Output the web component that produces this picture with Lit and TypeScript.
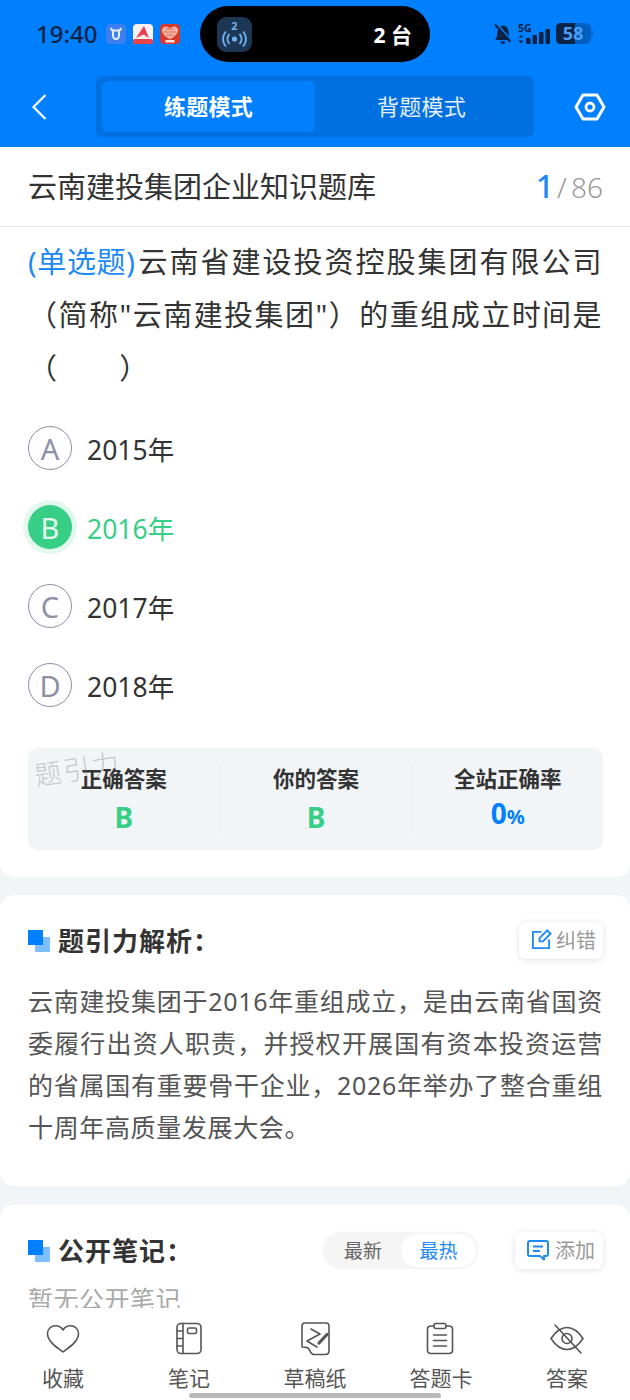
import { LitElement, html, css, svg } from 'lit';
import { customElement } from 'lit/decorators.js';

const options = [
  { key: 'A', text: '2015年' },
  { key: 'B', text: '2016年', picked: true },
  { key: 'C', text: '2017年' },
  { key: 'D', text: '2018年' },
];

const navIcons = {
  heart: svg`<path d="M17 30 C12 26 1.500 20 1.500 11.500 C1.500 7 5 3.800 9.500 3.800 C12.800 3.800 15.500 5.500 17 8 C18.500 5.500 21.200 3.800 24.500 3.800 C29 3.800 32.500 7 32.500 11.500 C32.500 20 22 26 17 30 Z"/>`,
  note: svg`<rect x="5" y="1.500" width="24" height="30" rx="4"/><path d="M11 1.500 V31.500 M5 9 H11 M5 16.500 H11 M5 24 H11"/><rect x="15.500" y="6" width="9" height="5.500" rx="1.500"/>`,
  draft: svg`<path d="M15 32.500 H27 Q31 32.500 31 29 V4 Q31 1 28 1 H7 Q4 1 4 4 V25 Q10 25 11 27 Q12 30.500 15 32.500 Z"/><path d="M13 7 L22 12 L9 19 L19 25"/><path d="M21 21 L29 12.500" stroke-width="3.200"/>`,
  card: svg`<path d="M10 4 H7 Q3.500 4 3.500 7.500 V28 Q3.500 31.500 7 31.500 H25 Q28.500 31.500 28.500 28 V7.500 Q28.500 4 25 4 H22"/><rect x="10" y="1.500" width="12" height="5" rx="2"/><path d="M9.500 13 H22.500 M9.500 18.500 H22.500 M9.500 24 H22.500"/>`,
  eye: svg`<path d="M1 16.500 C6 9 11 5.500 17 5.500 C23 5.500 28 9 33 16.500 C28 24 23 27.500 17 27.500 C11 27.500 6 24 1 16.500 Z"/><circle cx="17" cy="16.500" r="5"/><path d="M5 3 L31 31"/>`,
};

const tabs = [
  { icon: navIcons.heart, label: '收藏' },
  { icon: navIcons.note, label: '笔记' },
  { icon: navIcons.draft, label: '草稿纸' },
  { icon: navIcons.card, label: '答题卡' },
  { icon: navIcons.eye, label: '答案' },
];

@customElement('app-root')
export class AppRoot extends LitElement {
  static styles = css`
    :host {
      display: block;
      position: relative;
      width: 630px;
      height: 1400px;
      overflow: hidden;
      background: #f2f5f8;
      color: #333;
      font-family: 'Noto Sans', 'Noto Sans CJK SC', sans-serif;
    }

    .top {
      height: 147px;
      background: #0080ff;
      box-sizing: border-box;
      display: flex;
      flex-direction: column;
    }
    .status {
      height: 76px;
      display: flex;
      padding: 6px 0 0 36px;
      box-sizing: border-box;
      align-items: flex-start;
    }
    .clock {
      flex: none;
      font-size: 24px;
      font-weight: 500;
      color: #0b2345;
      margin-top: 13px;
      line-height: 30px;
      width: 70px;
    }
    .apps { flex: none; display: flex; gap: 7px; margin-top: 18px; width: 94px; }
    .apps svg { display: block; }
    .island {
      flex: none;
      width: 230px;
      height: 56px;
      border-radius: 28px;
      background: #000;
      display: flex;
      align-items: center;
      justify-content: space-between;
      box-sizing: border-box;
      padding: 0 18px 0 17px;
    }
    .island-icon {
      width: 35px;
      height: 35px;
      border-radius: 9px;
      background: #1c3654;
    }
    .island-count { color: #fff; font-size: 21px; font-weight: 700; }
    .sys {
      margin-left: 63px;
      display: flex;
      align-items: flex-start;
      gap: 5px;
      margin-top: 17px;
    }
    .sys svg { display: block; flex: none; overflow: visible; }
    .nav {
      height: 61px;
      display: flex;
      align-items: center;
      padding-left: 30px;
    }
    .back { flex: none; margin-right: 48px; }
    .seg {
      width: 438px;
      height: 61px;
      box-sizing: border-box;
      padding: 5px 6px;
      background: #0070e0;
      border-radius: 6px;
      display: flex;
    }
    .seg div {
      flex: 1;
      display: flex;
      align-items: center;
      justify-content: center;
      color: #e4f0ff;
      font-size: 22px;
      border-radius: 6px;
      letter-spacing: 0.3px;
      padding-bottom: 3px;
      box-sizing: border-box;
    }
    .seg .on { background: #0080ff; color: #fff; font-weight: 700; flex: none; width: 213px; }
    .gear { margin-left: 40px; }

    .card { background: #fff; border-radius: 14px; }
    .main { border-radius: 0 0 14px 14px; height: 730px; box-sizing: border-box; position: relative; }
    .title {
      height: 80px;
      box-sizing: border-box;
      border-bottom: 1px solid #e6e6e6;
      padding: 0 27px 3px 28px;
      display: flex;
      align-items: center;
      justify-content: space-between;
      font-size: 29px;
      color: #333;
    }
    .page { color: #999; font-size: 28px; font-weight: 300; word-spacing: -3px; display: flex; align-items: baseline; gap: 3px; }
    .page b { color: #1f8af5; font-size: 32px; font-weight: 500; }
    .question {
      margin: 8px 27px 0 28px;
      font-size: 29px;
      line-height: 53px;
      letter-spacing: 1.4px;
      color: #333;
      text-align: justify;
    }
    .question span { color: #1f8af5; letter-spacing: 0; margin-right: 3px; }
    .opts { margin: 32px 0 0 28px; display: flex; flex-direction: column; gap: 35px; }
    .opt { display: flex; align-items: center; gap: 15px; font-size: 26.5px; height: 44px; }
    .mark {
      width: 44px;
      height: 44px;
      box-sizing: border-box;
      border: 1.5px solid #8d8fa8;
      border-radius: 50%;
      color: #8d8fa8;
      display: flex;
      align-items: center;
      justify-content: center;
      font-size: 29px;
    }
    .opt.picked { color: #37cf86; }
    .opt.picked .mark {
      background: #37cf86;
      border-color: #37cf86;
      color: #e6fbf0;
      box-shadow: 0 0 0 5px #e2f8ed;
    }
    .stats {
      margin: 41px 27px 0 28px;
      height: 102px;
      background: #f2f5f8;
      border-radius: 9px;
      display: grid;
      grid-template-columns: repeat(3, 1fr);
      align-items: center;
    }
    .stat {
      text-align: center;
      height: 70px;
      display: flex;
      flex-direction: column;
      justify-content: space-between;
      border-left: 1px solid #e9ecef;
    }
    .stat:first-child { border-left: 0; }
    .stat label { font-size: 21.5px; font-weight: 700; line-height: 30px; color: #333; }
    .stat strong { font-size: 28px; font-weight: 700; line-height: 34px; color: #37cf86; }
    .stat strong.rate { color: #0080ff; }
    .stat strong small { font-size: 20px; }
    .mark-water {
      position: absolute;
      left: 34px;
      top: 601px;
      font-size: 27px;
      letter-spacing: 2px;
      font-weight: 300;
      color: rgba(120, 125, 130, 0.4);
      transform: rotate(-9deg);
    }

    .section { margin-top: 18px; padding: 27px 27px 0 28px; }
    .analysis { height: 291px; box-sizing: border-box; }
    .notes { height: 300px; box-sizing: border-box; margin-top: 19px; }
    .head { display: flex; align-items: center; height: 37px; }
    .cube { position: relative; width: 22px; height: 22px; margin-right: 8px; flex: none; }
    .cube::before, .cube::after { content: ''; position: absolute; width: 15px; height: 15px; }
    .cube::before { left: 7px; top: 7px; background: #80bfff; }
    .cube::after { left: 0; top: 0; background: #0080ff; }
    .head h2 { margin: 2px 0 0; font-size: 26px; font-weight: 700; color: #333; letter-spacing: 1px; flex: 1; line-height: 37px; }
    .chip {
      height: 37px;
      box-sizing: border-box;
      border-radius: 7px;
      background: #fff;
      box-shadow: 0 1px 6px rgba(0, 0, 0, 0.12);
      display: flex;
      align-items: center;
      gap: 4px;
      padding: 0 0 2px 12px;
      font-size: 20px;
      color: #999;
    }
    .fix { width: 84px; }
    .add { width: 88px; gap: 6px; }
    .sort {
      width: 155px;
      height: 37px;
      box-sizing: border-box;
      padding: 2px;
      border-radius: 19px;
      background: #f5f5f5;
      display: flex;
      margin-right: 37px;
      font-size: 19px;
      color: #666;
      box-shadow: 0 0 3px rgba(0, 0, 0, 0.05);
    }
    .sort div { flex: 1; display: flex; align-items: center; justify-content: center; padding-bottom: 2px; box-sizing: border-box; }
    .sort .on { background: #fff; color: #1f8af5; border-radius: 17px; flex: none; width: 75px; }
    .body {
      margin: 21px 0 0;
      font-size: 25px;
      line-height: 42px;
      letter-spacing: 0.65px;
      color: #555;
      text-align: justify;
    }
    .empty { margin: 10px 0 0; font-size: 25px; line-height: 40px; letter-spacing: 0.5px; color: #aaa; }

    .tabs {
      position: absolute;
      left: 0;
      right: 0;
      bottom: 0;
      height: 92px;
      background: #fff;
      display: grid;
      grid-template-columns: repeat(5, 126px);
    }
    .tab {
      display: flex;
      flex-direction: column;
      align-items: center;
      padding-top: 14px;
      font-size: 21px;
      color: #555;
      gap: 7px;
      line-height: 30px;
    }
    .tab svg { display: block; fill: none; stroke: #555; stroke-width: 1.6; stroke-linejoin: round; stroke-linecap: round; }
    .bar {
      position: absolute;
      left: 189px;
      bottom: 2px;
      width: 252px;
      height: 5px;
      border-radius: 3px;
      background: #b9b9b9;
    }
  `;

  renderStatus() {
    return html`
      <div class="status">
        <div class="clock">19:40</div>
        <div class="apps">
          <svg width="20" height="20" viewBox="0 0 20 20">
            <rect width="20" height="20" rx="4" fill="#3d7ff0"/>
            <path d="M5 4 Q5.500 6.500 7 6.500 H13 Q14.500 6.500 15 4 M7 6.500 V11 Q7 15 10 15 Q13 15 13 11 V6.500" fill="none" stroke="#e6f0ff" stroke-width="2"/>
          </svg>
          <svg width="20" height="20" viewBox="0 0 20 20">
            <rect width="20" height="20" rx="4" fill="#fbeff0"/>
            <path d="M3 14 L11 2 L16 14 L10.500 10.500 Z" fill="#e8424e"/>
            <rect y="15" width="20" height="5" rx="1.500" fill="#e8424e"/>
          </svg>
          <svg width="20" height="20" viewBox="0 0 20 20">
            <rect width="20" height="20" rx="4" fill="#d8392b"/>
            <path d="M10 15.500 C5 12 2 9.500 2 6.500 C2 4 4 2.500 6 2.500 Q8.500 2.500 10 4.500 Q11.500 2.500 14 2.500 C16 2.500 18 4 18 6.500 C18 9.500 15 12 10 15.500 Z" fill="#f3b3a4"/>
            <path d="M6 5 H14 M4.500 8 H15.500 M7 11 H13" stroke="#d8392b" stroke-width="1" stroke-dasharray="1.500 1"/>
            <rect x="5.500" y="16" width="9" height="2.500" fill="#f8e2d4"/>
          </svg>
        </div>
        <div class="island">
          <svg class="island-icon" viewBox="0 0 35 35">
            <text x="17.500" y="13" font-size="11" font-weight="700" text-anchor="middle" fill="#6fb0f0">2</text>
            <circle cx="17.500" cy="22" r="2.600" fill="#6fb0f0"/>
            <path d="M12.500 17 A7 7 0 0 0 12.500 27 M22.500 17 A7 7 0 0 1 22.500 27 M9 14.500 A11 11 0 0 0 9 29.500 M26 14.500 A11 11 0 0 1 26 29.500" fill="none" stroke="#6fb0f0" stroke-width="1.800"/>
          </svg>
          <span class="island-count">2 台</span>
        </div>
        <div class="sys">
          <svg width="20" height="22" viewBox="0 0 20 22">
            <path d="M2 17 Q4.500 14 4.500 9 Q4.500 3 10 2.500 Q15.500 3 15.500 9 Q15.500 14 18 17 Z M7.500 18.500 H12.500 Q12 21 10 21 Q8 21 7.500 18.500 Z" fill="#0b2345"/>
            <path d="M3.500 0.500 L19 18" stroke="#0080ff" stroke-width="1.500"/>
            <path d="M2 1.500 L17.500 19" stroke="#0b2345" stroke-width="2"/>
          </svg>
          <svg width="33" height="21" viewBox="0 0 33 21">
            <text x="0" y="9" font-size="10.500" font-weight="700" fill="#0b2345">5G</text>
            <path d="M3 12 L5.500 14.500 H0.500 Z M3 20.500 L0.500 17.500 H5.500 Z" fill="#0b2345"/>
            <rect x="8" y="15" width="4.500" height="6" rx="1" fill="#0b2345"/>
            <rect x="14.500" y="12" width="4.500" height="9" rx="1" fill="#0b2345"/>
            <rect x="21" y="9" width="4.500" height="12" rx="1" fill="#0b2345"/>
            <rect x="27.500" y="6" width="4.500" height="15" rx="1" fill="#0b2345"/>
          </svg>
          <svg width="37" height="21" viewBox="0 0 37 21">
            <rect width="35" height="21" rx="5" fill="#0060c0"/>
            <path d="M5 0 H19 V21 H5 Q0 21 0 16 V5 Q0 0 5 0 Z" fill="#0b2345"/>
            <path d="M35.500 7 Q37 8 37 10.500 Q37 13 35.500 14 Z" fill="#0060c0"/>
            <text x="17" y="16.500" font-size="18" font-weight="700" text-anchor="middle" fill="#4c9cf0">58</text>
          </svg>
        </div>
      </div>
    `;
  }

  render() {
    return html`
      <div class="top">
        ${this.renderStatus()}
        <div class="nav">
          <svg class="back" width="18" height="28" viewBox="0 0 18 28">
            <path d="M15.500 2 L3.500 14 L15.500 26" fill="none" stroke="#fff" stroke-width="2.200"/>
          </svg>
          <div class="seg">
            <div class="on">练题模式</div>
            <div>背题模式</div>
          </div>
          <svg class="gear" width="32" height="28" viewBox="0 0 32 28">
            <path d="M9 2 H23 L30 14 L23 26 H9 L2 14 Z" fill="none" stroke="#fff" stroke-width="3" stroke-linejoin="round"/>
            <circle cx="16" cy="14" r="4" fill="none" stroke="#fff" stroke-width="2.800"/>
          </svg>
        </div>
      </div>

      <div class="card main">
        <div class="title">
          <span>云南建投集团企业知识题库</span>
          <div class="page"><b>1</b>/ 86</div>
        </div>
        <div class="question"><span>(单选题)</span>云南省建设投资控股集团有限公司（简称"云南建投集团"）的重组成立时间是（　　）</div>
        <div class="opts">
          ${options.map(o => html`
            <div class="opt ${o.picked ? 'picked' : ''}">
              <div class="mark">${o.key}</div>
              <span>${o.text}</span>
            </div>
          `)}
        </div>
        <div class="stats">
          <div class="stat"><label>正确答案</label><strong>B</strong></div>
          <div class="stat"><label>你的答案</label><strong>B</strong></div>
          <div class="stat"><label>全站正确率</label><strong class="rate">0<small>%</small></strong></div>
        </div>
        <div class="mark-water">题引力</div>
      </div>

      <div class="card section analysis">
        <div class="head">
          <i class="cube"></i>
          <h2>题引力解析：</h2>
          <div class="chip fix">
            <svg width="21" height="21" viewBox="0 0 22 22" fill="none" stroke="#1f8af5" stroke-width="2">
              <path d="M11 3 H2 V20 H19 V11"/>
              <path d="M9 13 V9.500 L17 1.500 L20.500 5 L12.500 13 Z"/>
            </svg>
            纠错
          </div>
        </div>
        <p class="body">云南建投集团于2016年重组成立，是由云南省国资委履行出资人职责，并授权开展国有资本投资运营的省属国有重要骨干企业，2026年举办了整合重组十周年高质量发展大会。</p>
      </div>

      <div class="card section notes">
        <div class="head">
          <i class="cube"></i>
          <h2>公开笔记：</h2>
          <div class="sort"><div>最新</div><div class="on">最热</div></div>
          <div class="chip add">
            <svg width="22" height="22" viewBox="0 0 22 22" fill="none" stroke="#1f8af5" stroke-width="2" stroke-linejoin="round">
              <path d="M3 2 H19 Q21 2 21 4 V15 Q21 17 19 17 H17 L17 20.500 L13 17 H3 Q1 17 1 15 V4 Q1 2 3 2 Z"/>
              <path d="M6 7.500 H16 M6 12 H13"/>
            </svg>
            添加
          </div>
        </div>
        <p class="empty">暂无公开笔记</p>
      </div>

      <div class="tabs">
        ${tabs.map(t => html`
          <div class="tab">
            <svg width="34" height="34" viewBox="0 0 34 34">${t.icon}</svg>
            <span>${t.label}</span>
          </div>
        `)}
        <div class="bar"></div>
      </div>
    `;
  }
}
